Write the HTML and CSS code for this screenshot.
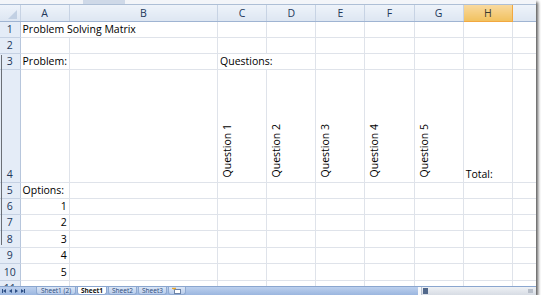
FILE: index.html
```html
<!DOCTYPE html>
<html lang="en">
<head>
  <meta charset="UTF-8">
  <title>Problem Solving Matrix</title>
  <link rel="stylesheet" href="styles.css">
</head>
<body>
  <div class="window">
    <!-- edge of the formula bar -->
    <div class="formula-edge"><span class="formula-tab"></span></div>

    <div class="sheet-wrap">
      <table class="sheet">
        <colgroup>
          <col class="c-head">
          <col class="c-a">
          <col class="c-b">
          <col class="c-q">
          <col class="c-q">
          <col class="c-q">
          <col class="c-q">
          <col class="c-q">
          <col class="c-q">
          <col class="c-q">
        </colgroup>
        <thead>
          <tr class="col-heads">
            <th class="corner"><span class="corner-mark"></span></th>
            <th>A</th><th>B</th><th>C</th><th>D</th><th>E</th><th>F</th><th>G</th>
            <th class="selected">H</th><th>I</th>
          </tr>
        </thead>
        <tbody>
          <tr><th>1</th><td colspan="2">Problem Solving Matrix</td><td></td><td></td><td></td><td></td><td></td><td></td><td></td></tr>
          <tr><th>2</th><td></td><td></td><td></td><td></td><td></td><td></td><td></td><td></td><td></td></tr>
          <tr><th>3</th><td>Problem:</td><td></td><td colspan="2">Questions:</td><td></td><td></td><td></td><td></td><td></td></tr>
          <tr class="tall">
            <th>4</th><td></td><td></td>
            <td><span class="rotated">Question 1</span></td>
            <td><span class="rotated">Question 2</span></td>
            <td><span class="rotated">Question 3</span></td>
            <td><span class="rotated">Question 4</span></td>
            <td><span class="rotated">Question 5</span></td>
            <td>Total:</td><td></td>
          </tr>
          <tr><th>5</th><td>Options:</td><td></td><td></td><td></td><td></td><td></td><td></td><td></td><td></td></tr>
          <tr><th>6</th><td class="num">1</td><td></td><td></td><td></td><td></td><td></td><td></td><td></td><td></td></tr>
          <tr><th>7</th><td class="num">2</td><td></td><td></td><td></td><td></td><td></td><td></td><td></td><td></td></tr>
          <tr class="r17"><th>8</th><td class="num">3</td><td></td><td></td><td></td><td></td><td></td><td></td><td></td><td></td></tr>
          <tr><th>9</th><td class="num">4</td><td></td><td></td><td></td><td></td><td></td><td></td><td></td><td></td></tr>
          <tr class="r17"><th>10</th><td class="num">5</td><td></td><td></td><td></td><td></td><td></td><td></td><td></td><td></td></tr>
          <tr class="cut"><th><span class="cut-label">11</span></th><td></td><td></td><td></td><td></td><td></td><td></td><td></td><td></td><td></td></tr>
        </tbody>
      </table>
      <span class="edge-line"></span>
    </div>

    <!-- sheet tabs and horizontal scrollbar -->
    <div class="tabbar">
      <div class="tab-nav">
        <span class="nav first"></span>
        <span class="nav prev"></span>
        <span class="nav next"></span>
        <span class="nav last"></span>
      </div>
      <div class="tabs">
        <span class="tab w40">Sheet1 (2)</span>
        <span class="tab active w30">Sheet1</span>
        <span class="tab w29">Sheet2</span>
        <span class="tab w29">Sheet3</span>
        <span class="tab insert">
          <svg width="10" height="7" viewBox="0 0 10 7">
            <rect x="2.5" y="2.5" width="6" height="4" fill="#fff" stroke="#6d84a8"/>
            <path d="M1 0.5 L2 2.5 L3 0.5 M0 1.5 H4" stroke="#e8a52a" stroke-width="1" fill="none"/>
          </svg>
        </span>
      </div>
      <div class="tab-fill"></div>
      <div class="hscroll">
        <span class="split"></span>
        <span class="arrow-left"></span>
        <span class="track"></span>
        <span class="arrow-right"></span>
      </div>
    </div>
  </div>
</body>
</html>
```

FILE: styles.css
```css
:root {
  --grid: #dfe3ea;
  --head-line: #b7c6dc;
  --head-text: #22375a;
}

* {
  margin: 0;
  padding: 0;
  box-sizing: border-box;
}

body {
  background: #fff;
  font-family: "Open Sans", "Noto Sans", sans-serif;
  font-size: 10.5px;
  color: #000;
}

.window {
  width: 536px;
  height: 295px;
  overflow: hidden;
  background: #fff;
  box-shadow: 2px 2px 3px rgba(0, 0, 0, 0.65);
  display: flex;
  flex-direction: column;
}

.formula-edge {
  flex: none;
  height: 5px;
  background: #f3f5f9;
  border-bottom: 1px solid #aebfd6;
  position: relative;
}

.formula-tab {
  position: absolute;
  left: 83px;
  top: 0;
  width: 42px;
  height: 4px;
  background: #cfd9e8;
}

.sheet-wrap {
  flex: none;
  height: 281px;
  overflow: hidden;
  position: relative;
}

/* stray dark edge on the left of the row headers */
.edge-line {
  position: absolute;
  left: 1px;
  top: 50px;
  width: 1px;
  height: 190px;
  background: #6b6f76;
}

/* Worksheet grid */
.sheet {
  border-collapse: collapse;
  table-layout: fixed;
  width: 562px;
}

.c-head { width: 20px; }
.c-a { width: 49px; }
.c-b { width: 148px; }
.c-q { width: 49px; }

.sheet tr { height: 16px; }
.sheet tr.r17 { height: 17px; }
.sheet tr.tall { height: 113px; }
.sheet tr.cut { height: 7px; }

.sheet td {
  border-right: 1px solid var(--grid);
  border-bottom: 1px solid var(--grid);
  padding: 0 2px 1px;
  vertical-align: bottom;
  white-space: nowrap;
  overflow: visible;
  line-height: 14px;
}

.sheet td.num { text-align: right; }

.sheet th {
  background: linear-gradient(#eef3fa 0%, #dde6f2 100%);
  color: var(--head-text);
  font-weight: normal;
  border-right: 1px solid var(--head-line);
  border-bottom: 1px solid var(--head-line);
  text-align: center;
  line-height: 14px;
  overflow: hidden;
}

.sheet tbody th {
  background: #e4ecf7;
  border-bottom-color: #c5d1e3;
  vertical-align: bottom;
  padding-bottom: 1px;
}

.sheet tr.cut td,
.sheet tr.cut th {
  line-height: 6px;
  padding: 0;
  vertical-align: top;
}

.cut-label {
  display: block;
  height: 6px;
  overflow: hidden;
  line-height: 14px;
}

.col-heads { height: 15px; }

.col-heads th {
  border-right-color: #c7d3e4;
  border-bottom: 1px solid #9fb4d2;
}

.col-heads th.selected {
  background: linear-gradient(#f9d99f 0%, #f1c15f 100%);
  border-color: #f2a840;
  color: #3c3a2e;
}

.corner {
  position: relative;
}

.corner-mark {
  position: absolute;
  right: 3px;
  bottom: 2px;
  width: 0;
  height: 0;
  border-left: 9px solid transparent;
  border-bottom: 9px solid #c2d0e3;
}

.rotated {
  display: inline-block;
  writing-mode: vertical-rl;
  transform: rotate(180deg);
  line-height: 12px;
  padding: 0 0 1px 0;
  margin-left: 1px;
}

/* Tab bar */
.tabbar {
  flex: none;
  height: 9px;
  display: flex;
  background: linear-gradient(#bcd0ee, #9bb6df);
  border-top: 1px solid #8aa6cf;
  font-size: 6.5px;
  line-height: 7px;
  color: #2b4a7a;
}

.tab-nav {
  display: flex;
  align-items: center;
  gap: 3px;
  padding: 0 3px;
  width: 36px;
}

.nav {
  width: 0;
  height: 0;
  border-top: 2px solid transparent;
  border-bottom: 2px solid transparent;
}

.nav.first,
.nav.prev { border-right: 3px solid #2d4f85; }
.nav.next,
.nav.last { border-left: 3px solid #2d4f85; }
.nav.first { box-shadow: -1px 0 0 #2d4f85; }
.nav.last { box-shadow: 1px 0 0 #2d4f85; }

.tabs {
  display: flex;
  align-items: stretch;
  gap: 1px;
}

.tab {
  text-align: center;
  background: linear-gradient(#dbe6f6, #b7cbea);
  border: 1px solid #8ea9d1;
  border-top: none;
  border-radius: 0 0 3px 3px;
  white-space: nowrap;
}

.w40 { width: 40px; }
.w30 { width: 30px; }
.w29 { width: 29px; }

.tab.active {
  background: #fff;
  color: #111;
  font-weight: bold;
}

.tab.insert {
  display: flex;
  align-items: center;
  padding: 0 3px;
}

.tab-fill {
  flex: 1;
}

.hscroll {
  width: 118px;
  display: flex;
  align-items: stretch;
  background: linear-gradient(#eef1f5, #d7dce4);
}

.split {
  width: 4px;
  background: #f8f9fb;
  border-right: 1px solid #b9c3d2;
}

.arrow-left {
  width: 5px;
  background: #51688b;
  margin: 1px;
}

.track {
  flex: 1;
}

.arrow-right {
  width: 5px;
  margin: 2px 3px 2px 0;
  background: #b8bfca;
}
```
